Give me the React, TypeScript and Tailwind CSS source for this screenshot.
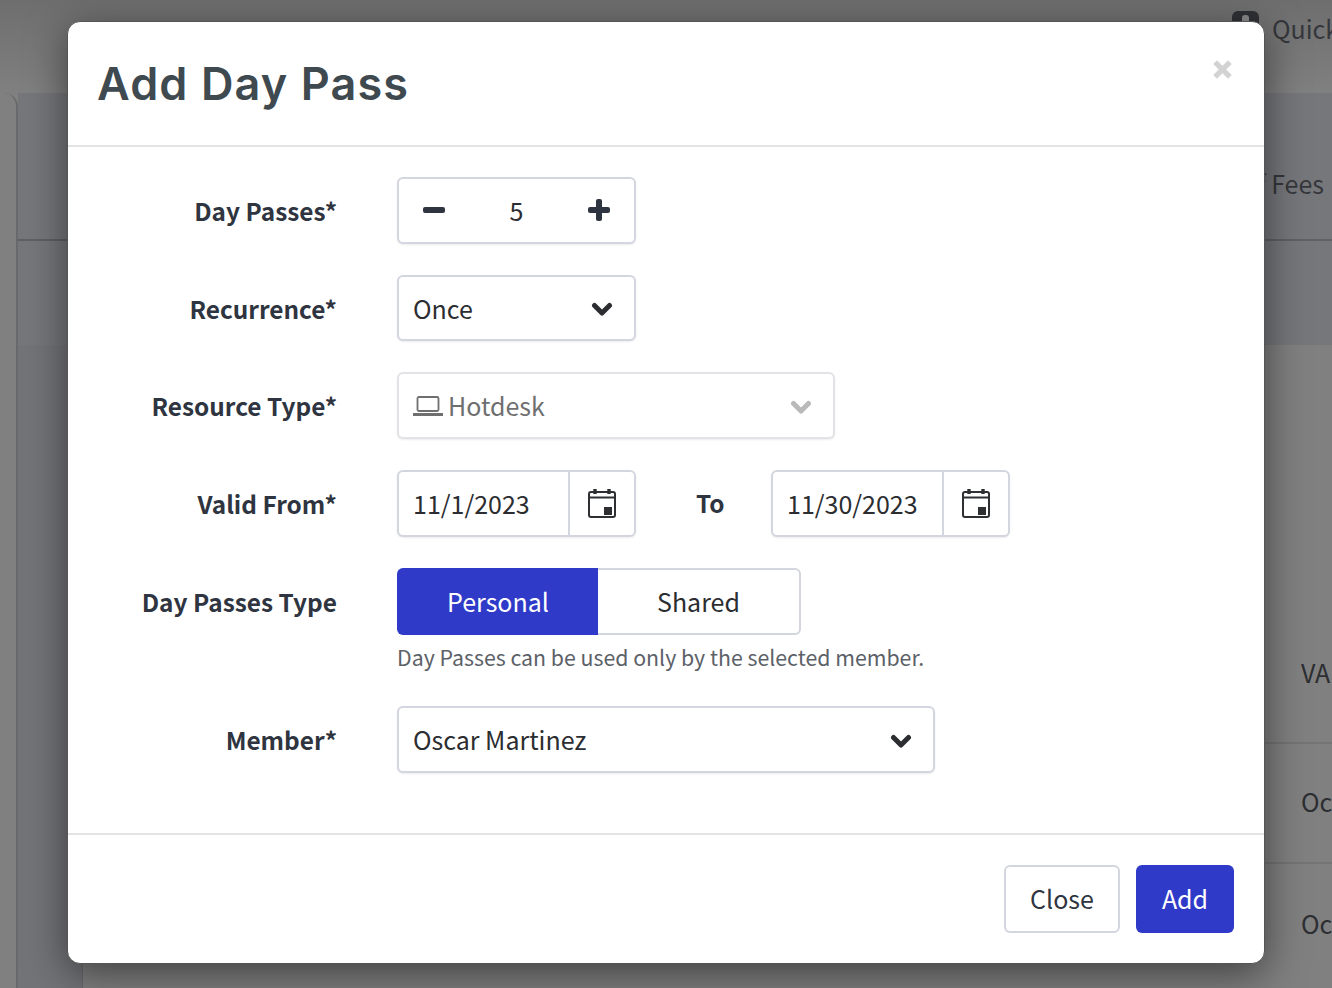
const sans = 'font-["Noto_Sans_CJK_JP","Noto_Sans",sans-serif]';

function Chevron({ className }: { className: string }) {
  return (
    <svg viewBox="0 0 22 14" className={className} fill="none" stroke="currentColor" strokeWidth="5" strokeLinecap="round" strokeLinejoin="round">
      <path d="M3.5 3.5l7.5 7.5 7.5-7.5" />
    </svg>
  );
}

function CalendarIcon() {
  return (
    <svg viewBox="0 0 28 30" className="w-[28px] h-[30px] mt-[1px] text-[#2d2f33]" fill="none">
      <rect x="1" y="3" width="26" height="25" rx="2" stroke="currentColor" strokeWidth="2" />
      <path d="M1 8.5h26" stroke="currentColor" strokeWidth="2" />
      <path d="M7 0v5M21 0v5" stroke="currentColor" strokeWidth="3.4" />
      <rect x="16" y="18" width="8" height="8" fill="currentColor" />
    </svg>
  );
}

function LaptopIcon() {
  return (
    <svg viewBox="0 0 30 20" className="w-[30px] h-[20px] text-[#6f6f6f]" fill="none" stroke="currentColor">
      <rect x="4.5" y="1" width="21" height="14" rx="1.5" strokeWidth="1.8" />
      <path d="M0 18.5h30" strokeWidth="3" />
    </svg>
  );
}

function Label({ children }: { children: string }) {
  return <div className="w-[269px] pt-[2px] text-right text-[24.4px] font-bold text-[#2f3540] leading-none">{children}</div>;
}

function Row({ label, children }: { label: string; children: React.ReactNode }) {
  return (
    <div className="flex items-center gap-[60px]">
      <Label>{label}</Label>
      {children}
    </div>
  );
}

const box = 'flex items-center rounded-[6px] border-2 border-[#d3d6de] bg-white shadow-[0_1px_2px_rgba(0,0,0,0.08)] text-[25px] text-[#2b2d30]';

function DateInput({ value }: { value: string }) {
  return (
    <div className={`${box} h-[67px] w-[239px]`}>
      <div className="w-[169px] pl-[14px]">{value}</div>
      <div className="flex-1 h-full flex items-center justify-center border-l-2 border-[#d3d6de]">
        <CalendarIcon />
      </div>
    </div>
  );
}

export default function App() {
  return (
    <div className={`relative w-[1332px] h-[988px] overflow-hidden bg-[#808080] text-[25px] ${sans}`}>
      {/* dimmed page behind the modal */}
      <div className="h-[93px] bg-gradient-to-b from-[#6e6e6e] to-[#808080] flex justify-end items-start pt-[11px]">
        <div className="flex items-start gap-[13px] w-[100px] text-[#35373c] shrink-0">
          <div className="relative w-[27px] h-[34px] shrink-0 rounded-[6px] bg-[#2f3136]">
            <div className="absolute left-[10px] top-[4px] w-[7px] h-[12px] rounded-[3px] bg-[#8a8a8a]" />
          </div>
          <span className="-mt-[1px]">Quick</span>
        </div>
      </div>
      <div className="flex h-[895px]">
        <div className="w-[18px] shrink-0 bg-[#808080] border-r-2 border-[#69696b] rounded-tr-[14px]" />
        <div className="flex-1 flex flex-col">
          <div className="h-[148px] bg-[#76777b] border-b-2 border-[#5f6066] flex justify-end items-center pr-[8px] text-[#35373c] pt-[36px]">
            of Fees
          </div>
          <div className="h-[104px] bg-[#76777b]" />
          <div className="flex-1 flex">
            <div className="w-[65px] bg-[#737478] border-r border-[#6a6a6a]" />
            <div className="flex-1 flex flex-col items-end text-[#2c2e32]">
              <div className="h-[399px] w-full border-b-2 border-[#747474] flex justify-end items-end pb-[51px]">
                <span className="w-[31px] overflow-hidden">VA</span>
              </div>
              <div className="h-[120px] w-full border-b-2 border-[#747474] flex justify-end items-center pb-[3px]">
                <span className="w-[31px] overflow-hidden">Oc</span>
              </div>
              <div className="h-[124px] w-full flex justify-end items-center pb-[5px]">
                <span className="w-[31px] overflow-hidden">Oc</span>
              </div>
            </div>
          </div>
        </div>
      </div>

      {/* modal */}
      <div className="absolute left-[67px] top-[21px] w-[1198px] h-[943px] rounded-[13px] border border-[#555555] bg-white shadow-[0_10px_40px_rgba(0,0,0,0.5)] flex flex-col">
        <div className="h-[125px] border-b-2 border-[#e3e3e3] flex justify-between pl-[29px] pr-[32px]">
          <h1 className='font-["Inter",sans-serif] font-semibold text-[45px] leading-none text-[#3f4a50] mt-[39px] tracking-[1.1px]'>Add Day Pass</h1>
          <svg viewBox="0 0 18 18" className="w-[19px] h-[19px] mt-[38px] text-[#d3d3d3]" fill="none" stroke="currentColor" strokeWidth="5">
            <path d="M2 2l14 14M16 2L2 16" />
          </svg>
        </div>

        <div className="flex-1 flex flex-col pt-[30px]">
          <Row label="Day Passes*">
            <div className={`${box} h-[67px] w-[239px] justify-between pl-[24px] pr-[24px]`}>
              <div className="w-[22px] h-[6px] rounded-[2px] bg-[#2f3540] -mt-[2px]" />
              <span className="text-[#2b2d30]">5</span>
              <div className="relative w-[22px] h-[22px] -mt-[2px]">
                <div className="absolute left-0 top-[8px] w-[22px] h-[6px] rounded-[2px] bg-[#2f3540]" />
                <div className="absolute left-[8px] top-0 w-[6px] h-[22px] rounded-[2px] bg-[#2f3540]" />
              </div>
            </div>
          </Row>
          <div className="mt-[31px]">
            <Row label="Recurrence*">
              <div className={`${box} h-[66px] w-[239px] justify-between pl-[14px] pr-[21px]`}>
                <span className="mt-[1px]">Once</span>
                <Chevron className="w-[22px] h-[14px] mt-[2px] text-[#2b2d30]" />
              </div>
            </Row>
          </div>
          <div className="mt-[31px]">
            <Row label="Resource Type*">
              <div className={`${box} h-[67px] w-[438px] justify-between pl-[14px] pr-[21px] border-[#e2e3e6] text-[#6f6f6f]`}>
                <div className="flex items-center gap-[5px]">
                  <LaptopIcon />
                  <span>Hotdesk</span>
                </div>
                <Chevron className="w-[22px] h-[14px] mt-[3px] text-[#b9b9b9]" />
              </div>
            </Row>
          </div>
          <div className="mt-[31px]">
            <Row label="Valid From*">
              <div className="flex items-center">
                <DateInput value="11/1/2023" />
                <div className="ml-[60px] w-[75px] text-[24.4px] font-bold text-[#2f3540]">To</div>
                <DateInput value="11/30/2023" />
              </div>
            </Row>
          </div>
          <div className="mt-[31px] flex gap-[60px]">
            <div className="h-[67px] flex items-center">
              <Label>Day Passes Type</Label>
            </div>
            <div>
              <div className="flex h-[67px] w-[404px]">
                <div className="w-[201px] pl-[1px] rounded-l-[6px] bg-[#2f3bc8] text-white flex items-center justify-center">Personal</div>
                <div className="flex-1 rounded-r-[6px] border-2 border-l-0 border-[#d3d6de] text-[#2b2d30] flex items-center justify-center">Shared</div>
              </div>
              <p className="mt-[5px] text-[21.3px] leading-[34px] text-[#5c6168]">Day Passes can be used only by the selected member.</p>
            </div>
          </div>
          <div className="mt-[32px]">
            <Row label="Member*">
              <div className={`${box} h-[67px] w-[538px] justify-between pl-[14px] pr-[21px]`}>
                <span>Oscar Martinez</span>
                <Chevron className="w-[22px] h-[14px] mt-[2px] text-[#2b2d30]" />
              </div>
            </Row>
          </div>
        </div>

        <div className="h-[130px] border-t-2 border-[#e3e3e3] flex justify-end items-start gap-[16px] pt-[30px] pr-[30px]">
          <button className="h-[68px] w-[116px] rounded-[6px] border-2 border-[#d3d6de] text-[#2f3540] bg-white">Close</button>
          <button className="h-[68px] w-[98px] rounded-[6px] bg-[#2f3bc8] text-white">Add</button>
        </div>
      </div>
    </div>
  );
}
